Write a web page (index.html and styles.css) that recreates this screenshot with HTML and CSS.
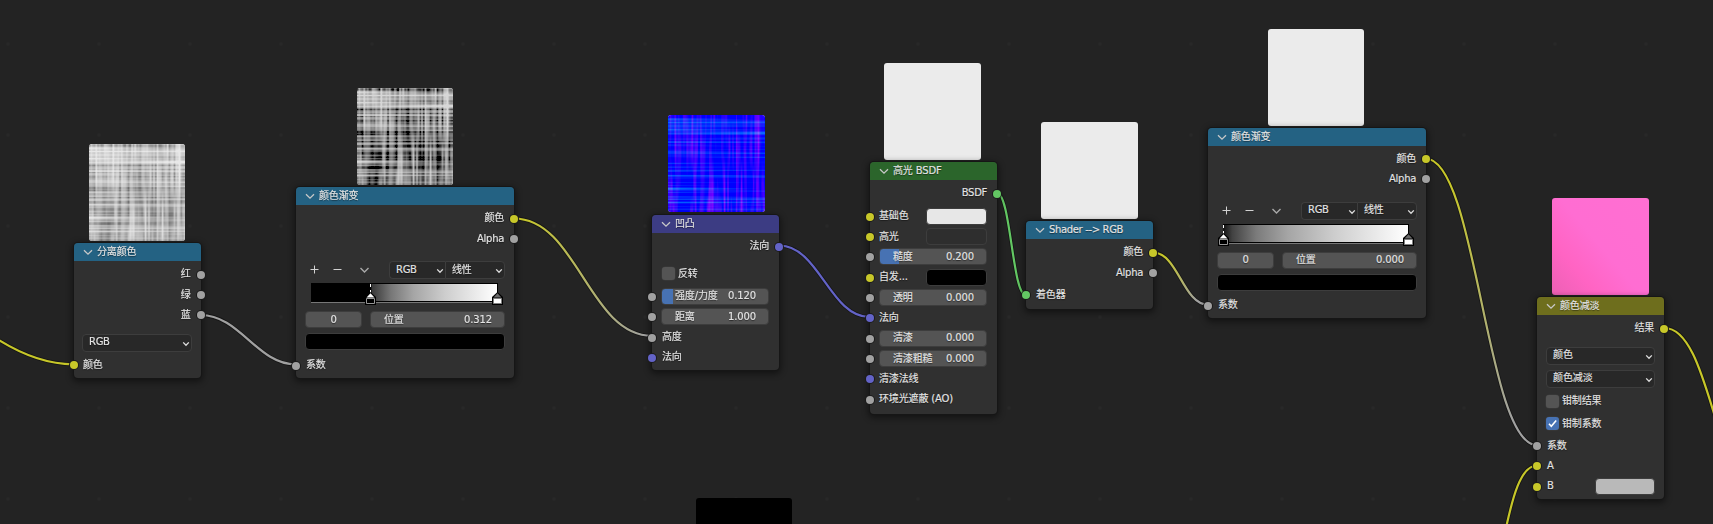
FILE: index.html
```html
<!DOCTYPE html>
<html lang="zh-CN">
<head>
<meta charset="utf-8">
<title>Shader Nodes</title>
<link rel="stylesheet" href="styles.css">
</head>
<body>
<svg width="0" height="0" class="defs">
  <defs>
    <symbol id="down" viewBox="0 0 8 6"><path d="M1.2 1.4 4 4.3 6.8 1.4" fill="none" stroke="currentColor" stroke-width="1.3"/></symbol>
    <symbol id="fold" viewBox="0 0 10 7"><path d="M1 1.2 5 5.2 9 1.2" fill="none" stroke="currentColor" stroke-width="1.3"/></symbol>
    <symbol id="stop0" viewBox="0 0 11 13"><path d="M0 13V5L5.500 0 11 5v8z" fill="#000"/><path d="M1.500 5.500 5.500 1.200l4 4.300z" fill="#fff"/><path d="M1.500 6.500h8v5h-8z" fill="#000" stroke="#969696"/></symbol>
    <symbol id="stop1" viewBox="0 0 11 13"><path d="M0 13V5L5.500 0 11 5v8z" fill="#000"/><path d="M1.500 5.500 5.500 1.200l4 4.300z" fill="#6a6a6a"/><path d="M1.500 6.500h8v5h-8z" fill="#fff" stroke="#808080"/></symbol>
  </defs>
</svg>
<main class="canvas">
  <svg class="wires" viewBox="0 0 1713 524">
    <defs>
      <linearGradient id="w3" gradientUnits="userSpaceOnUse" x1="514" y1="0" x2="652" y2="0"><stop offset=".05" stop-color="#c7c729"/><stop offset=".95" stop-color="#a1a1a1"/></linearGradient>
      <linearGradient id="w6" gradientUnits="userSpaceOnUse" x1="1153" y1="0" x2="1208" y2="0"><stop offset=".2" stop-color="#c7c729"/><stop offset=".8" stop-color="#a1a1a1"/></linearGradient>
      <linearGradient id="w7" gradientUnits="userSpaceOnUse" x1="1425" y1="158" x2="1537" y2="445"><stop offset=".1" stop-color="#c7c729"/><stop offset=".9" stop-color="#a1a1a1"/></linearGradient>
    </defs>
    <g class="wire-shadow" id="shadow"></g>
    <g class="wire">
      <path stroke="#c7c729" d="M-6 337C20 354 45 364.300 73.500 364.300"/>
      <path stroke="#a1a1a1" d="M200.500 315C240 315 257 364.500 296 364.500"/>
      <path stroke="url(#w3)" d="M514 218.500C577 218.500 589 335.800 652 335.800"/>
      <path stroke="#6363c7" d="M779.500 245.700C819 245.700 830 317 869.500 317"/>
      <path stroke="#63c763" d="M996.500 192.600C1011 192.600 1012 295.200 1026 295.200"/>
      <path stroke="url(#w6)" d="M1153 252.500C1178 252.500 1183 304.700 1208 304.700"/>
      <path stroke="url(#w7)" d="M1425.500 158.500C1477 158.500 1486 445.200 1537 445.200"/>
      <path stroke="#c7c729" d="M1664.500 328C1690 328 1703 378 1716 420"/>
      <path stroke="#c7c729" d="M1537 465.500C1519 465.500 1511 506 1506 528"/>
    </g>
  </svg>

  <canvas class="preview p1" data-weave="light" width="96" height="97"></canvas>
  <canvas class="preview p2" data-weave="dark" width="96" height="97"></canvas>
  <canvas class="preview p3" data-weave="normal" width="97" height="97"></canvas>
  <div class="preview p4"></div>
  <div class="preview p5"></div>
  <div class="preview p6"></div>
  <div class="preview p7"></div>
  <div class="preview p8"></div>

  <section class="node n1">
    <header class="blue"><svg class="fold"><use href="#fold"/></svg>分离颜色</header>
    <div class="row out">红<i class="sock r grey"></i></div>
    <div class="row out">绿<i class="sock r grey"></i></div>
    <div class="row out">蓝<i class="sock r grey"></i></div>
    <div class="row gap-mode"><div class="select">RGB<svg class="down"><use href="#down"/></svg></div></div>
    <div class="row gap-small"><i class="sock l yellow"></i>颜色</div>
  </section>

  <section class="node ramp-node n2">
    <header class="blue"><svg class="fold"><use href="#fold"/></svg>颜色渐变</header>
    <div class="row out">颜色<i class="sock r yellow"></i></div>
    <div class="row out">Alpha<i class="sock r grey"></i></div>
    <div class="tools">
      <svg class="ops" viewBox="0 0 70 17"><path d="M4.500 8.500h8M8.500 4.500v8M27.500 8.500h8" /><path d="M54.500 7 58.500 11 62.500 7" class="dim"/></svg>
      <div class="pair"><div class="select">RGB<svg class="down"><use href="#down"/></svg></div><div class="select">线性<svg class="down"><use href="#down"/></svg></div></div>
    </div>
    <div class="ramp from-third"><svg class="stop a"><use href="#stop0"/></svg><svg class="stop b"><use href="#stop1"/></svg></div>
    <div class="fields"><div class="field index">0</div><div class="field pos"><span>位置</span><span>0.312</span></div></div>
    <div class="swatch black full"></div>
    <div class="row factor"><i class="sock l grey"></i>系数</div>
  </section>

  <section class="node n3">
    <header class="indigo"><svg class="fold"><use href="#fold"/></svg>凹凸</header>
    <div class="row out">法向<i class="sock r violet"></i></div>
    <div class="row gap-check"><span class="check"></span>反转</div>
    <div class="row gap-field"><i class="sock l grey"></i><div class="field fill12"><span>强度/力度</span><span>0.120</span></div></div>
    <div class="row"><i class="sock l grey"></i><div class="field"><span>距离</span><span>1.000</span></div></div>
    <div class="row"><i class="sock l grey"></i>高度</div>
    <div class="row"><i class="sock l violet"></i>法向</div>
  </section>

  <section class="node n4">
    <header class="green-h"><svg class="fold"><use href="#fold"/></svg>高光 BSDF</header>
    <div class="row out">BSDF<i class="sock r green"></i></div>
    <div class="row first-in"><i class="sock l yellow"></i>基础色<div class="swatch half white"></div></div>
    <div class="row"><i class="sock l yellow"></i>高光<div class="swatch half dark"></div></div>
    <div class="row"><i class="sock l grey"></i><div class="field fill20"><span>糙度</span><span>0.200</span></div></div>
    <div class="row"><i class="sock l yellow"></i>自发...<div class="swatch half black"></div></div>
    <div class="row"><i class="sock l grey"></i><div class="field"><span>透明</span><span>0.000</span></div></div>
    <div class="row"><i class="sock l violet"></i>法向</div>
    <div class="row"><i class="sock l grey"></i><div class="field"><span>清漆</span><span>0.000</span></div></div>
    <div class="row"><i class="sock l grey"></i><div class="field"><span>清漆粗糙</span><span>0.000</span></div></div>
    <div class="row"><i class="sock l violet"></i>清漆法线</div>
    <div class="row"><i class="sock l grey"></i>环境光遮蔽 (AO)</div>
  </section>

  <section class="node n5">
    <header class="blue"><svg class="fold"><use href="#fold"/></svg>Shader --&gt; RGB</header>
    <div class="row out">颜色<i class="sock r yellow"></i></div>
    <div class="row out">Alpha<i class="sock r grey"></i></div>
    <div class="row gap-small"><i class="sock l green"></i>着色器</div>
  </section>

  <section class="node ramp-node n6">
    <header class="blue"><svg class="fold"><use href="#fold"/></svg>颜色渐变</header>
    <div class="row out">颜色<i class="sock r yellow"></i></div>
    <div class="row out">Alpha<i class="sock r grey"></i></div>
    <div class="tools">
      <svg class="ops" viewBox="0 0 70 17"><path d="M4.500 8.500h8M8.500 4.500v8M27.500 8.500h8"/><path d="M54.500 7 58.500 11 62.500 7" class="dim"/></svg>
      <div class="pair"><div class="select">RGB<svg class="down"><use href="#down"/></svg></div><div class="select">线性<svg class="down"><use href="#down"/></svg></div></div>
    </div>
    <div class="ramp from-start"><svg class="stop a"><use href="#stop0"/></svg><svg class="stop b"><use href="#stop1"/></svg></div>
    <div class="fields"><div class="field index">0</div><div class="field pos"><span>位置</span><span>0.000</span></div></div>
    <div class="swatch black full"></div>
    <div class="row factor"><i class="sock l grey"></i>系数</div>
  </section>

  <section class="node n7">
    <header class="olive"><svg class="fold"><use href="#fold"/></svg>颜色减淡</header>
    <div class="row out">结果<i class="sock r yellow"></i></div>
    <div class="stack">
      <div class="select">颜色<svg class="down"><use href="#down"/></svg></div>
      <div class="select">颜色减淡<svg class="down"><use href="#down"/></svg></div>
      <div class="option"><span class="check"></span>钳制结果</div>
      <div class="option"><span class="check on"><svg viewBox="0 0 13 13"><path d="M3 6.800 5.300 9.300 10.200 3.600"/></svg></span>钳制系数</div>
    </div>
    <div class="row"><i class="sock l grey"></i>系数</div>
    <div class="row"><i class="sock l yellow"></i>A</div>
    <div class="row"><i class="sock l yellow"></i>B<div class="swatch half light"></div></div>
  </section>
</main>
<script src="weave.js"></script>
</body>
</html>
```
FILE: styles.css
```css
* { box-sizing: border-box; }
body { margin: 0; background: #232323; overflow: hidden; }
.defs { position: absolute; }
.canvas {
  position: relative; width: 1713px; height: 524px; overflow: hidden;
  background: #232323;
  color: #e4e4e4;
  font: 10px/12px "DejaVu Sans", "Noto Sans CJK SC", sans-serif;
  letter-spacing: -.15px;
  -webkit-text-stroke: .15px currentColor;
}
.canvas::before {
  content: ""; position: absolute; inset: 0;
  background: radial-gradient(circle, #282828 0 1.500px, transparent 2px) -37.500px -1.500px / 91px 91px;
}
.wires { position: absolute; inset: 0; width: 1713px; height: 524px; }
.wire path { fill: none; stroke-width: 2.200; }
.wire-shadow path { fill: none; stroke: #151515; stroke-width: 3.800; }

.preview { position: absolute; width: 97px; height: 97px; border-radius: 3px; background: #ebebeb; }
.p1 { left: 89px; top: 144px; width: 96px; }
.p2 { left: 357px; top: 88px; width: 96px; }
.p3 { left: 668px; top: 115px; }
.p4 { left: 884px; top: 63px; }
.p5 { left: 1041px; top: 122px; }
.p6 { left: 1268px; top: 29px; width: 96px; }
.p7 { left: 1552px; top: 198px; background: linear-gradient(50deg, #ec60b4 0, #ff64c3 25%, #ff6dd2 50%, #ff6fd2 100%); }
.p8 { left: 696px; top: 498px; width: 96px; background: #000; }

.node {
  position: absolute; width: 127px; border-radius: 4px; background: #303030;
  box-shadow: 0 0 0 1px #161616, 0 2px 6px 2px rgba(0, 0, 0, .45);
  text-shadow: 0 1px 1px rgba(0, 0, 0, .5);
}
.n1 { left: 74px; top: 243px; height: 135px; width: 126.500px; }
.n2 { left: 296px; top: 187px; height: 191px; }
.n3 { left: 652px; top: 215px; height: 155px; }
.n4 { left: 870px; top: 162px; height: 252px; }
.n5 { left: 1026px; top: 221px; height: 88px; }
.n6 { left: 1208px; top: 128px; height: 190px; }
.n7 { left: 1537px; top: 297px; height: 202px; }
.ramp-node { width: 218px; }

header { display: flex; align-items: center; height: 18px; margin-bottom: 3.200px; padding: 0 0 0 9px; border-radius: 4px 4px 0 0; }
.n5 header { letter-spacing: -.35px; }
.fold { width: 10px; height: 7px; margin-right: 4px; color: #c8c8c8; }
.blue { background: #246283; }
.indigo { background: #3c3c83; }
.green-h { background: #2b652b; }
.olive { background: #6e6e1d; }

.row { position: relative; display: flex; align-items: center; height: 20.350px; padding: 0 10px; }
.out { justify-content: flex-end; letter-spacing: -.3px; }
.sock { position: absolute; top: 6.600px; width: 8px; height: 8px; border-radius: 50%; box-shadow: 0 0 0 1px #1b1b1b; }
.sock.l { left: -4.300px; }
.sock.r { right: -4.300px; }
.grey { background: #a1a1a1; }
.yellow { background: #c7c729; }
.violet { background: #6363c7; }
.green { background: #63c763; }

.select { display: flex; align-items: center; justify-content: space-between; flex: 1; height: 18px; padding: 0 1px 1px 6px; background: #282828; border: 1px solid #3d3d3d; border-radius: 4px; letter-spacing: -.3px; }
.down { width: 8px; height: 6px; margin-top: 3px; color: #dedede; }
.field { display: flex; align-items: center; justify-content: space-between; flex: 1; height: 17px; padding: 0 12px 0 13px; border-radius: 4px; background: #545454; border: 1px solid #3d3d3d; }
.row:has(.field) { padding: 0 10px 0 9px; }
.fill12 { background: linear-gradient(90deg, #4772b3 0 11px, #545454 11px); }
.fill20 { background: linear-gradient(90deg, #4772b3 0 19px, #545454 19px); }
.check { width: 13px; height: 13px; margin-right: 3px; border-radius: 3px; background: #545454; box-shadow: 0 0 0 .5px #3d3d3d; flex: none; }
.check.on { background: #4772b3; }
.check svg { display: block; width: 13px; height: 13px; }
.check path { fill: none; stroke: #fff; stroke-width: 1.600; }
.swatch { height: 17px; border: 1px solid #3d3d3d; border-radius: 4px; }
.half { width: 60px; margin-left: auto; }
.black { background: #000; }
.white { background: #e7e7e7; }
.dark { background: #2e2e2e; }
.light { background: #b9b9b9; }

.n4 .row { padding-left: 9px; }
.n4 .half { width: 61px; }
.n7 .row:last-child { padding-right: 9px; }
.n1 .row:has(.select) { padding: 0 9px 0 8px; }
.n1 .gap-small { padding-left: 9px; }
.gap-mode { margin-top: 7.200px; }
.gap-small { margin-top: 2px; }
.gap-check { margin-top: 6.800px; }
.gap-field { margin-top: 2.600px; }
.first-in { margin-top: 2.600px; }

.tools { display: flex; justify-content: space-between; height: 18px; margin: 12.500px 9px 0 10px; }
.ops { width: 70px; height: 17px; }
.ops path { fill: none; stroke: #d2d2d2; stroke-width: 1; }
.ops .dim { stroke: #a8a8a8; stroke-width: 1.400; }
.pair { display: flex; width: 116px; }
.pair .select:first-child { border-radius: 4px 0 0 4px; border-right: 0; }
.pair .select:last-child { border-radius: 0 4px 4px 0; flex: none; width: 60px; }
.ramp { position: relative; height: 19px; margin: 4px 16px 0 15px; border: solid #000; border-width: 1px 1px 1px 0; box-shadow: 0 1px #777; }
.n6 .ramp { margin-right: 17px; }
.from-third { background: linear-gradient(90deg, #000 0 32%, #393939 33%, #777 43%, #a5a5a5 55%, #cdcdcd 72%, #fff); }
.from-start { background: linear-gradient(90deg, #111 0, #424242 5%, #7b7b7b 18%, #a5a5a5 35%, #cdcdcd 60%, #fff); }
.stop { position: absolute; top: 8px; width: 11px; height: 13px; }
.stop.a { left: 54px; }
.from-start .stop.a { left: -5px; }
.stop.b { right: -6px; }
.ramp::before { content: ""; position: absolute; left: 59px; top: 0; height: 9px; border-left: 1px dashed #fff; }
.from-start::before { left: 0; }
.fields { display: flex; gap: 8px; margin: 9px 9px 0; }
.index { flex: none; width: 57px; justify-content: center; padding: 0; }
.full { margin: 5px 9px 0; }
.factor { margin-top: 4.600px; }
.n6 header { margin-bottom: 2.500px; }

.stack { display: flex; flex-direction: column; gap: 5px; margin: 8px 9px 3px; }
.stack .select { flex: none; letter-spacing: -.1px; }
.option { display: flex; align-items: center; height: 17.500px; }
```
FILE: weave.js
```js
function rng(seed) {
  return () => {
    seed = (seed * 1664525 + 1013904223) >>> 0;
    return seed / 4294967296;
  };
}

function lattice(seed, cols, rows) {
  const next = rng(seed);
  return Array.from({ length: rows + 2 }, () => Array.from({ length: cols + 2 }, next));
}

// Bilinear value noise, stretched by the cell sizes.
function sampler(seed, cw, ch) {
  const grid = lattice(seed, Math.ceil(97 / cw), Math.ceil(97 / ch));
  return (x, y) => {
    const u = x / cw, v = y / ch, i = Math.floor(u), j = Math.floor(v);
    const a = u - i, b = v - j;
    return (grid[j][i] * (1 - a) + grid[j][i + 1] * a) * (1 - b) +
      (grid[j + 1][i] * (1 - a) + grid[j + 1][i + 1] * a) * b;
  };
}

const vert = sampler(17, 1.7, 34), vert2 = sampler(5, 5, 30);
const horiz = sampler(91, 140, 1.4), horiz2 = sampler(33, 120, 3);

document.querySelectorAll("[data-weave]").forEach((c) => {
  const g = c.getContext("2d"), img = g.createImageData(c.width, c.height);
  for (let y = 0; y < c.height; y++) {
    for (let x = 0; x < c.width; x++) {
      const v = vert(x, y) * 0.65 + vert2(x, y) * 0.35;
      const h = horiz(x, y) * 0.75 + horiz2(x, y) * 0.25;
      const s = 1 - (1 - v) * (1 - h) * 1.5 - (y - 50) / 600;
      let rgb;
      if (c.dataset.weave === "light") {
        const t = Math.min(232, 112 + 130 * s);
        rgb = [t, t, t];
      } else if (c.dataset.weave === "dark") {
        const t = 215 * Math.pow(Math.min(1, Math.max(0, (s - 0.2) / 0.7)), 0.65);
        rgb = [t, t, t];
      } else {
        rgb = [Math.max(0, v - 0.38) * 260, Math.max(0, h - 0.4) * 230, 255];
      }
      img.data.set([...rgb, 255], (y * c.width + x) * 4);
    }
  }
  g.putImageData(img, 0, 0);
});

document.getElementById("shadow").innerHTML =
  [...document.querySelectorAll(".wire path")].map((p) => `<path d="${p.getAttribute("d")}"/>`).join("");
```
